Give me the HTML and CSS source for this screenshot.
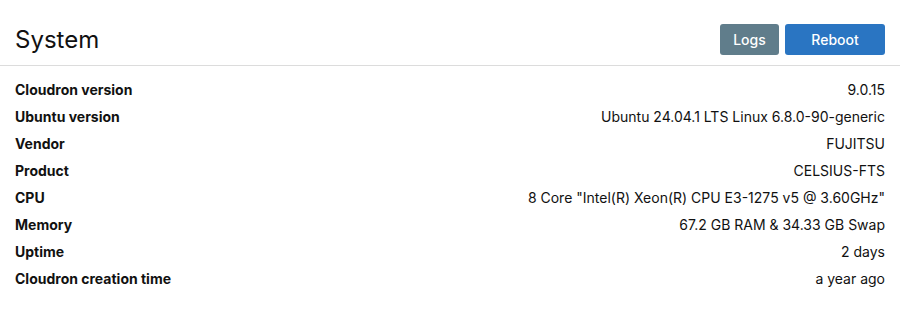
FILE: index.html
```html
<!DOCTYPE html>
<html lang="en">
<head>
  <meta charset="UTF-8" />
  <title>System</title>
  <link rel="stylesheet" href="styles.css">
</head>
<body>
  <section class="card">
    <header class="card-header">
      <h1>System</h1>
      <div class="actions">
        <button class="btn btn-secondary" type="button">Logs</button>
        <button class="btn btn-primary" type="button">Reboot</button>
      </div>
    </header>
    <dl class="info">
      <div class="row"><dt>Cloudron version</dt><dd>9.0.15</dd></div>
      <div class="row"><dt>Ubuntu version</dt><dd>Ubuntu 24.04.1 LTS Linux 6.8.0-90-generic</dd></div>
      <div class="row"><dt>Vendor</dt><dd>FUJITSU</dd></div>
      <div class="row"><dt>Product</dt><dd>CELSIUS-FTS</dd></div>
      <div class="row"><dt>CPU</dt><dd>8 Core "Intel(R) Xeon(R) CPU E3-1275 v5 @ 3.60GHz"</dd></div>
      <div class="row"><dt>Memory</dt><dd>67.2 GB RAM &amp; 34.33 GB Swap</dd></div>
      <div class="row"><dt>Uptime</dt><dd>2 days</dd></div>
      <div class="row"><dt>Cloudron creation time</dt><dd>a year ago</dd></div>
    </dl>
  </section>
</body>
</html>
```

FILE: styles.css
```css
:root {
  --text: #111111;
  --border: #dcdcdc;
  --grey: #607d8b;
  --blue: #2a75c2;
}

* {
  box-sizing: border-box;
}

body {
  margin: 0;
  background: #ffffff;
  color: var(--text);
  font-family: Inter, 'Noto Sans', sans-serif;
  font-size: 14px;
  -webkit-font-smoothing: antialiased;
}

.card {
  width: 900px;
}

.card-header {
  display: flex;
  align-items: center;
  justify-content: space-between;
  height: 66px;
  padding: 13px 15px 0;
  border-bottom: 1px solid var(--border);
}

.card-header h1 {
  margin: 0;
  font-size: 24px;
  font-weight: 400;
}

.actions {
  display: flex;
  gap: 6px;
}

.btn {
  height: 31px;
  border: none;
  border-radius: 3px;
  color: #ffffff;
  font-family: inherit;
  font-size: 14px;
  font-weight: 500;
  cursor: pointer;
}

.btn-secondary {
  width: 59px;
  background: var(--grey);
}

.btn-primary {
  width: 100px;
  background: var(--blue);
}

.info {
  margin: 0;
  padding: 10px 15px;
}

.row {
  display: flex;
  justify-content: space-between;
  align-items: center;
  height: 27px;
}

.row dt {
  font-weight: 700;
}

.row dd {
  margin: 0;
}
```
